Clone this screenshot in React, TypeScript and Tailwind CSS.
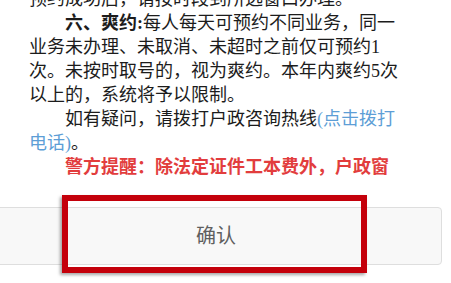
export default function App() {
  return (
    <div
      className="relative flex h-[283px] w-[451px] flex-col overflow-hidden bg-white text-[#1c1c1c]"
      style={{ fontFamily: '"Liberation Serif", "Noto Sans CJK SC", serif' }}
    >
      {/* notice body, scrolled so the top line is cut */}
      <div className="h-[180px] shrink-0 overflow-hidden">
        <div className="mt-[-13px] pl-[29px] pr-[45px] text-[18px] leading-[24px]">
          <p>预约成功后，请按时段到所选窗口办理。</p>
          <p className="indent-[36px]">
            <b>六、爽约:</b>每人每天可预约不同业务，同一业务未办理、未取消、未超时之前仅可预约1次。未按时取号的，视为爽约。本年内爽约5次以上的，系统将予以限制。
          </p>
          <p className="indent-[36px]">
            如有疑问，请拨打户政咨询热线
            <span className="text-[#5d9ed6]">(点击拨打电话)</span>。
          </p>
          <p className="indent-[36px] font-bold text-[#e23d3d]">
            警方提醒：除法定证件工本费外，户政窗口不收取任何费用。
          </p>
        </div>
      </div>

      {/* footer button */}
      <div className="flex flex-1 items-start bg-white pt-[27px]">
        <button className="ml-[-10px] flex h-[58px] w-[452px] items-center justify-center rounded-[4px] border border-[#dedede] bg-[#f8f8f8] text-[20px] text-[#5f5f5f]">
          确认
        </button>
      </div>

      {/* highlight annotation */}
      <div className="pointer-events-none absolute left-[62px] top-[195px] h-[78px] w-[305px] border-[6px] border-[#c4000b] shadow-[-2px_2px_3px_rgba(0,0,0,0.35)]" />
    </div>
  );
}
